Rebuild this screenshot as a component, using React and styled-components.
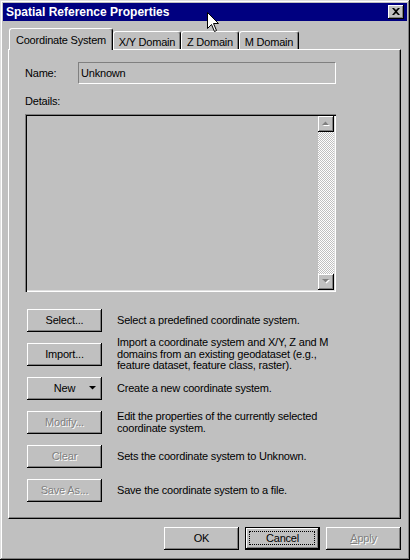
import styled, { createGlobalStyle } from "styled-components";

const GlobalStyle = createGlobalStyle`
  body {
    margin: 0;
    font-family: "Liberation Sans", Arial, sans-serif;
    font-size: 11px;
    letter-spacing: -0.2px;
    color: #000;
  }
`;

const raised = `
  box-shadow: inset -1px -1px #000, inset 1px 1px #fff, inset -2px -2px #808080;
`;

function ArrowGlyph({ dir, disabled }) {
  const pts = dir === "up" ? "0,4 7,4 3.5,0.5" : "0,0 7,0 3.5,3.5";
  return (
    <svg width="9" height="6" viewBox="0 0 9 6">
      {disabled && <polygon points={pts} fill="#fff" transform="translate(1 1)" />}
      <polygon points={pts} fill={disabled ? "#808080" : "#000"} />
    </svg>
  );
}

function Details() {
  return (
    <DetailsBox>
      <Scrollbar>
        <ScrollBtn>
          <ArrowGlyph dir="up" disabled />
        </ScrollBtn>
        <Track />
        <ScrollBtn>
          <ArrowGlyph dir="down" disabled />
        </ScrollBtn>
      </Scrollbar>
    </DetailsBox>
  );
}

const actions = [
  { label: "Select...", text: ["Select a predefined coordinate system."] },
  {
    label: "Import...",
    text: [
      "Import a coordinate system and X/Y, Z and M",
      "domains from an existing geodataset (e.g.,",
      "feature dataset, feature class, raster).",
    ],
  },
  { label: "New", menu: true, text: ["Create a new coordinate system."] },
  {
    label: "Modify...",
    disabled: true,
    text: ["Edit the properties of the currently selected", "coordinate system."],
  },
  { label: "Clear", disabled: true, text: ["Sets the coordinate system to Unknown."] },
  { label: "Save As...", disabled: true, text: ["Save the coordinate system to a file."] },
];

const tabs = [
  { label: "Coordinate System", w: 104, active: true },
  { label: "X/Y Domain", w: 68 },
  { label: "Z Domain", w: 58 },
  { label: "M Domain", w: 60 },
];

export default function App() {
  return (
    <>
      <GlobalStyle />
      <Win>
        <TitleBar>
          <span>Spatial Reference Properties</span>
          <CloseBtn>
            <svg width="8" height="7" viewBox="0 0 8 7">
              <path d="M0 0h2l2 2 2-2h2L5 3.5 8 7H6L4 5 2 7H0l3-3.5z" fill="#000" />
            </svg>
          </CloseBtn>
        </TitleBar>
        <Body>
          <TabStrip>
            {tabs.map((t) => (
              <Tab key={t.label} $w={t.w} $active={t.active}>
                {t.label}
              </Tab>
            ))}
          </TabStrip>
          <Panel>
            <NameRow>
              <FieldLabel>Name:</FieldLabel>
              <NameField>Unknown</NameField>
            </NameRow>
            <DetailsLabel>Details:</DetailsLabel>
            <Details />
            <ActionList>
              {actions.map((a) => (
                <ActionRow key={a.label}>
                  <Button $disabled={a.disabled}>
                    {a.label}
                    {a.menu && (
                      <MenuArrow>
                        <ArrowGlyph dir="down" />
                      </MenuArrow>
                    )}
                  </Button>
                  <Description>
                    {a.text.map((line) => (
                      <div key={line}>{line}</div>
                    ))}
                  </Description>
                </ActionRow>
              ))}
            </ActionList>
          </Panel>
          <ButtonBar>
            <Button>OK</Button>
            <Button $default>Cancel</Button>
            <Button $disabled>
              <u>A</u>pply
            </Button>
          </ButtonBar>
        </Body>
        <Cursor width="13" height="21" viewBox="0 0 13 21">
          <path
            d="M0.5 0.5V16.5L4.5 12.5L7.5 19.5L9.5 18.5L6.5 11.5H11.5Z"
            fill="#fff"
            stroke="#000"
            strokeWidth="1"
          />
        </Cursor>
      </Win>
    </>
  );
}

const Win = styled.div`
  position: relative;
  width: 410px;
  height: 560px;
  box-sizing: border-box;
  padding: 3px;
  background: #c0c0c0;
  box-shadow: inset -1px -1px #000, inset 1px 1px #dfdfdf,
    inset -2px -2px #808080, inset 2px 2px #fff;
  display: flex;
  flex-direction: column;
  overflow: hidden;
`;

const TitleBar = styled.div`
  height: 18px;
  background: #000080;
  color: #fff;
  font-weight: bold;
  font-size: 12px;
  letter-spacing: 0;
  display: flex;
  align-items: center;
  justify-content: space-between;
  padding: 0 3px 0 3px;
`;

const CloseBtn = styled.div`
  width: 16px;
  height: 14px;
  background: #c0c0c0;
  ${raised}
  display: flex;
  align-items: center;
  justify-content: center;
  padding-bottom: 1px;
  box-sizing: border-box;
`;

const Body = styled.div`
  flex: 1;
  padding: 7px 6px 0 5px;
  display: flex;
  flex-direction: column;
`;

const TabStrip = styled.div`
  display: flex;
  align-items: flex-end;
  height: 21px;
  padding-left: 1px;
`;

const Tab = styled.div`
  position: relative;
  z-index: ${(p) => (p.$active ? 1 : 0)};
  width: ${(p) => p.$w}px;
  height: ${(p) => (p.$active ? 22 : 18)}px;
  margin-bottom: ${(p) => (p.$active ? -1 : 0)}px;
  box-sizing: border-box;
  border: 1px solid;
  border-color: #fff #000 transparent #fff;
  border-bottom: none;
  border-radius: 3px 3px 0 0;
  box-shadow: inset -1px 0 #808080;
  background: #c0c0c0;
  display: flex;
  align-items: center;
  justify-content: center;
  padding-top: ${(p) => (p.$active ? 0 : 2)}px;
  white-space: nowrap;
`;

const Panel = styled.div`
  height: 470px;
  box-sizing: border-box;
  border: 1px solid;
  border-color: #fff #000 #000 #fff;
  box-shadow: inset -1px -1px #808080;
  padding: 12px 0 0 16px;
  display: flex;
  flex-direction: column;
`;

const NameRow = styled.div`
  display: flex;
  align-items: center;
  height: 22px;
`;

const FieldLabel = styled.span`
  width: 53px;
`;

const NameField = styled.div`
  width: 258px;
  height: 22px;
  box-sizing: border-box;
  border: 1px solid;
  border-color: #808080 #fff #fff #808080;
  padding-left: 2px;
  display: flex;
  align-items: center;
`;

const DetailsLabel = styled.div`
  margin: 10px 0 6px;
  line-height: 14px;
`;

const DetailsBox = styled.div`
  width: 311px;
  height: 178px;
  box-sizing: border-box;
  padding: 2px;
  box-shadow: inset 1px 1px #808080, inset 2px 2px #000, inset -1px -1px #fff,
    inset -2px -2px #dfdfdf;
  display: flex;
  justify-content: flex-end;
`;

const Scrollbar = styled.div`
  width: 16px;
  display: flex;
  flex-direction: column;
`;

const ScrollBtn = styled.div`
  width: 16px;
  height: 16px;
  background: #c0c0c0;
  ${raised}
  display: flex;
  align-items: center;
  justify-content: center;
`;

const Track = styled.div`
  flex: 1;
  background: repeating-conic-gradient(#fff 0 25%, #c0c0c0 0 50%) 0 0 / 2px 2px;
`;

const ActionList = styled.div`
  margin-top: 17px;
  padding-left: 2px;
  display: flex;
  flex-direction: column;
  gap: 11px;
`;

const ActionRow = styled.div`
  display: flex;
  align-items: center;
  height: 23px;
  gap: 15px;
`;

const Description = styled.div`
  line-height: 11.5px;
  white-space: nowrap;
`;

const Button = styled.div`
  position: relative;
  width: 75px;
  height: 23px;
  flex: none;
  box-sizing: border-box;
  background: #c0c0c0;
  box-shadow: ${(p) =>
    p.$default
      ? "inset 0 0 0 1px #000, inset -2px -2px #000, inset 2px 2px #fff, inset -3px -3px #808080"
      : "inset -1px -1px #000, inset 1px 1px #fff, inset -2px -2px #808080"};
  color: ${(p) => (p.$disabled ? "#808080" : "#000")};
  text-shadow: ${(p) => (p.$disabled ? "1px 1px 0 #fff" : "none")};
  display: flex;
  align-items: center;
  justify-content: center;
  padding-bottom: 1px;

  &::after {
    content: "";
    display: ${(p) => (p.$default ? "block" : "none")};
    position: absolute;
    inset: 4px 5px 5px 4px;
    border: 1px dotted #000;
  }
`;

const ButtonBar = styled.div`
  display: flex;
  justify-content: flex-end;
  gap: 6px;
  margin-top: 8px;
`;

const MenuArrow = styled.span`
  position: absolute;
  right: 4px;
  top: 9px;
  display: flex;
`;

const Cursor = styled.svg`
  position: absolute;
  left: 207px;
  top: 12px;
`;
